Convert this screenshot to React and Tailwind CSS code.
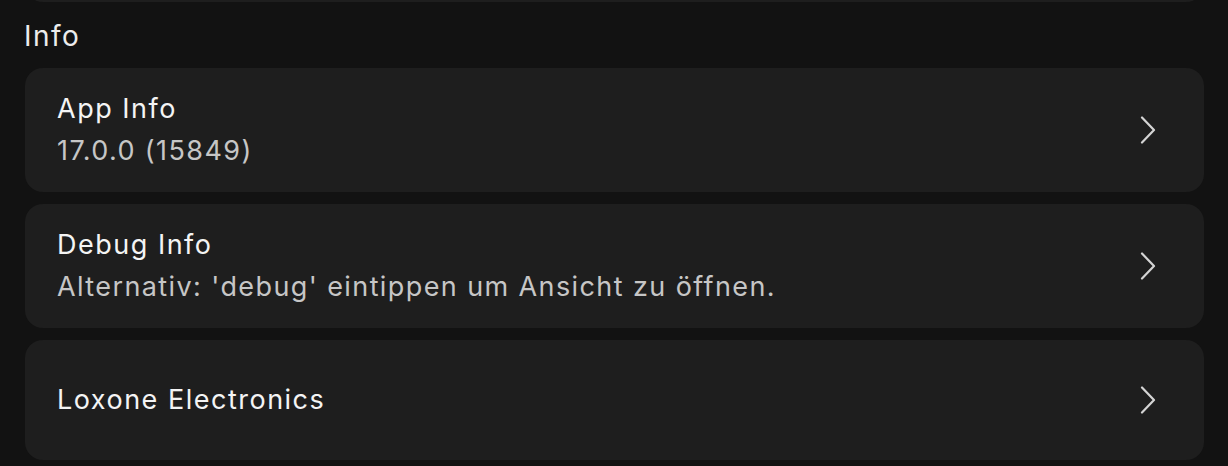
import React from "react";

function Chevron() {
  return (
    <svg width="16" height="28" viewBox="0 0 16 28" fill="none" className="shrink-0">
      <path d="M2 1.5 L14 14 L2 26.5" stroke="#d4d4d4" strokeWidth="2.2" strokeLinecap="round" strokeLinejoin="round" />
    </svg>
  );
}

function Card({ title, subtitle, className }) {
  return (
    <div className={`flex items-center justify-between rounded-[18px] bg-[#1e1e1e] pl-8 pr-[48px] ${className}`}>
      <div className="flex flex-col gap-2">
        <div className="text-[27px] leading-[34px] tracking-[1.5px] text-[#f4f4f4]">{title}</div>
        {subtitle && <div className="text-[27px] leading-[34px] tracking-[1.4px] text-[#c6c6c6]">{subtitle}</div>}
      </div>
      <Chevron />
    </div>
  );
}

export default function App() {
  return (
    <div className="h-[466px] w-[1228px] overflow-hidden bg-[#121212] font-['Inter',sans-serif] antialiased">
      <div className="ml-[25px] mr-[24px] flex h-[2px] items-end overflow-hidden">
        <div className="h-[40px] w-full shrink-0 rounded-[18px] bg-[#1e1e1e]" />
      </div>
      <div className="mt-[17px] pl-[24px] text-[28px] leading-[34px] tracking-[1.5px] text-[#ececec]">Info</div>
      <div className="ml-[25px] mr-[24px] mt-[15px] flex flex-col gap-3">
        <Card className="h-[124px]" title="App Info" subtitle="17.0.0 (15849)" />
        <Card className="h-[124px]" title="Debug Info" subtitle="Alternativ: 'debug' eintippen um Ansicht zu öffnen." />
        <Card className="h-[120px]" title="Loxone Electronics" />
      </div>
    </div>
  );
}
